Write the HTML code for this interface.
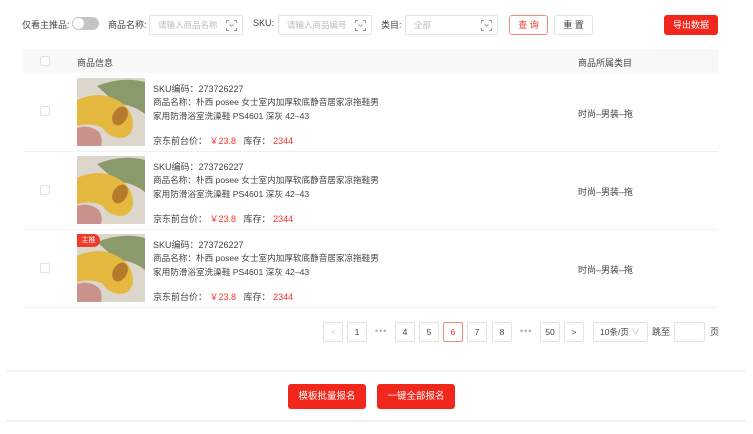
<!DOCTYPE html>
<html><head><meta charset="utf-8"><style>
*{margin:0;padding:0;box-sizing:border-box}
body{width:753px;height:434px;background:#fff;font-family:"Liberation Sans","Noto Sans CJK SC",sans-serif;color:#444;font-size:9px;position:relative;overflow:hidden}
.a{position:absolute;white-space:nowrap}
.inp{position:absolute;height:20px;border:1px solid #e3e3e3;border-radius:2px;color:#bbb;font-size:8.5px;line-height:18px;padding-left:8px}
.inp svg{position:absolute;right:5px;top:4px}
.btn{position:absolute;border-radius:3px;text-align:center;font-size:9px}
.cb{position:absolute;width:10px;height:10px;border:1px solid #e2e2e2;border-radius:2px;background:#fff}
.pg{position:absolute;top:322px;width:20px;height:20px;border:1px solid #e3e3e3;border-radius:2px;text-align:center;line-height:18px;font-size:8.5px;color:#444}
.dots{position:absolute;top:322px;line-height:18px;color:#aaa;font-size:9px;letter-spacing:1px}
.red{color:#f2352b}
.line{position:absolute;left:23px;width:695px;height:1px;background:#f0f0f0}
</style></head><body>
<div class="a" style="left:22px;top:18px;font-size:9px">仅看主推品:</div>
<div class="a" style="left:72px;top:17px;width:27px;height:13px;border-radius:7px;background:#c4c4c4"><div style="position:absolute;left:1px;top:1px;width:11px;height:11px;border-radius:50%;background:#fff"></div></div>
<div class="a" style="left:108px;top:18px">商品名称:</div>
<div class="inp" style="left:149px;top:15px;width:94px">请输入商品名称<svg width="11" height="11" viewBox="0 0 11 11" fill="none" stroke="#999" stroke-width="0.9"><path d="M0.5 3V0.5H3M8 0.5H10.5V3M10.5 8V10.5H8M3 10.5H0.5V8M3.5 4.5L5.5 6L7.5 4.5"/></svg></div>
<div class="a" style="left:253px;top:18px">SKU:</div>
<div class="inp" style="left:278px;top:15px;width:94px">请输入商品编号<svg width="11" height="11" viewBox="0 0 11 11" fill="none" stroke="#999" stroke-width="0.9"><path d="M0.5 3V0.5H3M8 0.5H10.5V3M10.5 8V10.5H8M3 10.5H0.5V8M3.5 4.5L5.5 6L7.5 4.5"/></svg></div>
<div class="a" style="left:381px;top:18px">类目:</div>
<div class="inp" style="left:405px;top:15px;width:93px">全部<svg width="11" height="11" viewBox="0 0 11 11" fill="none" stroke="#999" stroke-width="0.9"><path d="M0.5 3V0.5H3M8 0.5H10.5V3M10.5 8V10.5H8M3 10.5H0.5V8M3.5 4.5L5.5 6L7.5 4.5"/></svg></div>
<div class="btn" style="left:509px;top:15px;width:39px;height:20px;border:1px solid #f08a84;color:#f2352b;line-height:18px">查 询</div>
<div class="btn" style="left:554px;top:15px;width:39px;height:20px;border:1px solid #e3e3e3;color:#444;line-height:18px">重 置</div>
<div class="btn" style="left:664px;top:15px;width:54px;height:20px;background:#f2271c;color:#fff;line-height:20px">导出数据</div>

<div class="a" style="left:23px;top:49px;width:695px;height:24px;background:#f8f8f8"></div>
<div class="cb" style="left:40px;top:56px"></div>
<div class="a" style="left:77px;top:56px">商品信息</div>
<div class="a" style="left:578px;top:56px">商品所属类目</div>

<div class="line" style="top:151px"></div>
<div class="line" style="top:229px"></div>
<div class="line" style="top:307px"></div>

<div class="a" style="left:0;top:73px">
 <div class="cb" style="left:40px;top:33px"></div>
 <svg class="a" style="left:77px;top:5px" width="68" height="68" viewBox="0 0 68 68"><rect width="68" height="68" fill="#dcd6cc"/><path d="M20 8 Q45 -2 68 4 V36 Q55 26 40 26Z" fill="#8a9a6a"/><path d="M0 68 V50 Q12 46 22 54 Q26 60 24 68Z" fill="#c9928c"/><path d="M0 22 Q22 12 40 22 Q56 30 56 48 Q54 60 42 60 Q30 58 26 50 Q14 44 0 48Z" fill="#e5b840"/><ellipse cx="43" cy="38" rx="7" ry="10" fill="#b57a2c" transform="rotate(30 43 38)"/></svg>
 <div class="a" style="left:153px;top:9px">SKU编码：273726227</div>
 <div class="a" style="left:153px;top:23px;font-size:8.6px">商品名称：朴西 posee 女士室内加厚软底静音居家凉拖鞋男</div>
 <div class="a" style="left:153px;top:37px;font-size:8.6px">家用防滑浴室洗澡鞋 PS4601 深灰 42–43</div>
 <div class="a" style="left:153px;top:61px">京东前台价： <span class="red">￥23.8</span> &nbsp; 库存： <span class="red">2344</span></div>
 <div class="a" style="left:578px;top:34px">时尚–男装–拖</div>
</div>
<div class="a" style="left:0;top:151px">
 <div class="cb" style="left:40px;top:34px"></div>
 <svg class="a" style="left:77px;top:5px" width="68" height="68" viewBox="0 0 68 68"><rect width="68" height="68" fill="#dcd6cc"/><path d="M20 8 Q45 -2 68 4 V36 Q55 26 40 26Z" fill="#8a9a6a"/><path d="M0 68 V50 Q12 46 22 54 Q26 60 24 68Z" fill="#c9928c"/><path d="M0 22 Q22 12 40 22 Q56 30 56 48 Q54 60 42 60 Q30 58 26 50 Q14 44 0 48Z" fill="#e5b840"/><ellipse cx="43" cy="38" rx="7" ry="10" fill="#b57a2c" transform="rotate(30 43 38)"/></svg>
 <div class="a" style="left:153px;top:9px">SKU编码：273726227</div>
 <div class="a" style="left:153px;top:23px;font-size:8.6px">商品名称：朴西 posee 女士室内加厚软底静音居家凉拖鞋男</div>
 <div class="a" style="left:153px;top:37px;font-size:8.6px">家用防滑浴室洗澡鞋 PS4601 深灰 42–43</div>
 <div class="a" style="left:153px;top:61px">京东前台价： <span class="red">￥23.8</span> &nbsp; 库存： <span class="red">2344</span></div>
 <div class="a" style="left:578px;top:34px">时尚–男装–拖</div>
</div>
<div class="a" style="left:0;top:229px">
 <div class="cb" style="left:40px;top:34px"></div>
 <svg class="a" style="left:77px;top:5px" width="68" height="68" viewBox="0 0 68 68"><rect width="68" height="68" fill="#dcd6cc"/><path d="M20 8 Q45 -2 68 4 V36 Q55 26 40 26Z" fill="#8a9a6a"/><path d="M0 68 V50 Q12 46 22 54 Q26 60 24 68Z" fill="#c9928c"/><path d="M0 22 Q22 12 40 22 Q56 30 56 48 Q54 60 42 60 Q30 58 26 50 Q14 44 0 48Z" fill="#e5b840"/><ellipse cx="43" cy="38" rx="7" ry="10" fill="#b57a2c" transform="rotate(30 43 38)"/></svg>
 <div class="a" style="left:77px;top:5px;width:23px;height:13px;background:#ef3b2a;color:#fff;font-size:7px;line-height:13px;text-align:center;border-radius:0 7px 7px 0">主推</div>
 <div class="a" style="left:153px;top:9px">SKU编码：273726227</div>
 <div class="a" style="left:153px;top:23px;font-size:8.6px">商品名称：朴西 posee 女士室内加厚软底静音居家凉拖鞋男</div>
 <div class="a" style="left:153px;top:37px;font-size:8.6px">家用防滑浴室洗澡鞋 PS4601 深灰 42–43</div>
 <div class="a" style="left:153px;top:61px">京东前台价： <span class="red">￥23.8</span> &nbsp; 库存： <span class="red">2344</span></div>
 <div class="a" style="left:578px;top:34px">时尚–男装–拖</div>
</div>

<div class="pg" style="left:323px;color:#ccc">&lt;</div>
<div class="pg" style="left:347px">1</div>
<div class="dots" style="left:375px">•••</div>
<div class="pg" style="left:395px">4</div>
<div class="pg" style="left:419px">5</div>
<div class="pg" style="left:443px;border-color:#f08a84;color:#f2352b">6</div>
<div class="pg" style="left:467px">7</div>
<div class="pg" style="left:492px">8</div>
<div class="dots" style="left:520px">•••</div>
<div class="pg" style="left:540px">50</div>
<div class="pg" style="left:564px">&gt;</div>
<div class="pg" style="left:593px;width:55px;text-align:left;padding-left:6px">10条/页 <span style="color:#bbb">∨</span></div>
<div class="a" style="left:652px;top:325px">跳至</div>
<div class="pg" style="left:674px;width:31px"></div>
<div class="a" style="left:710px;top:325px">页</div>

<div class="a" style="left:6px;top:370px;width:740px;height:2px;background:#f3f3f3"></div>
<div class="btn" style="left:288px;top:384px;width:78px;height:25px;background:#f2271c;color:#fff;line-height:25px;font-size:9.5px">模板批量报名</div>
<div class="btn" style="left:377px;top:384px;width:78px;height:25px;background:#f2271c;color:#fff;line-height:25px;font-size:9.5px">一键全部报名</div>
<div class="a" style="left:6px;top:420px;width:740px;height:2px;background:#f0f0f0"></div>
</body></html>
